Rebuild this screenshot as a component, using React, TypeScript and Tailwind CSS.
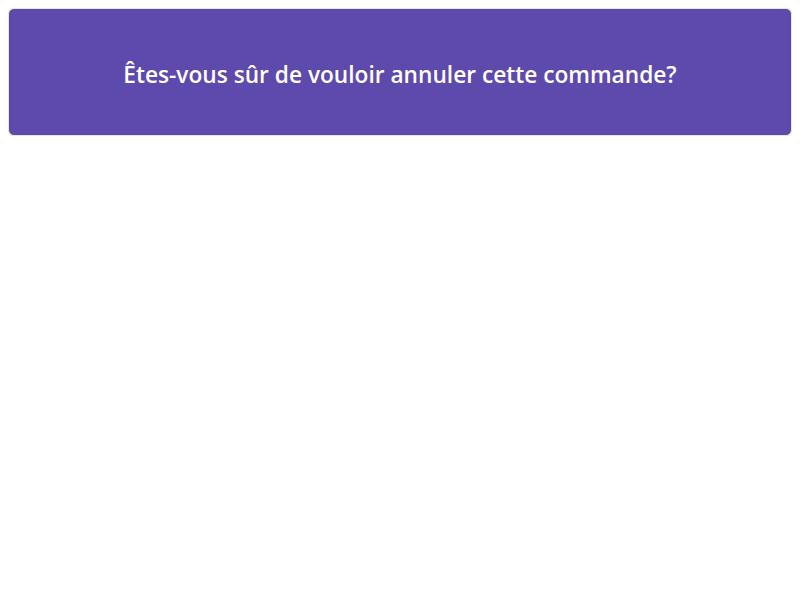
export default function App() {
  return (
    <div className="min-h-[600px] bg-white p-2" style={{ fontFamily: '"Open Sans", sans-serif' }}>
      <div className="rounded-md border border-gray-200 bg-[#5e49ad] px-6 pt-[50px] pb-[44px] text-center">
        <p className="text-[22.7px] leading-8 font-semibold text-white">
          Êtes-vous sûr de vouloir annuler cette commande?
        </p>
      </div>
    </div>
  )
}
